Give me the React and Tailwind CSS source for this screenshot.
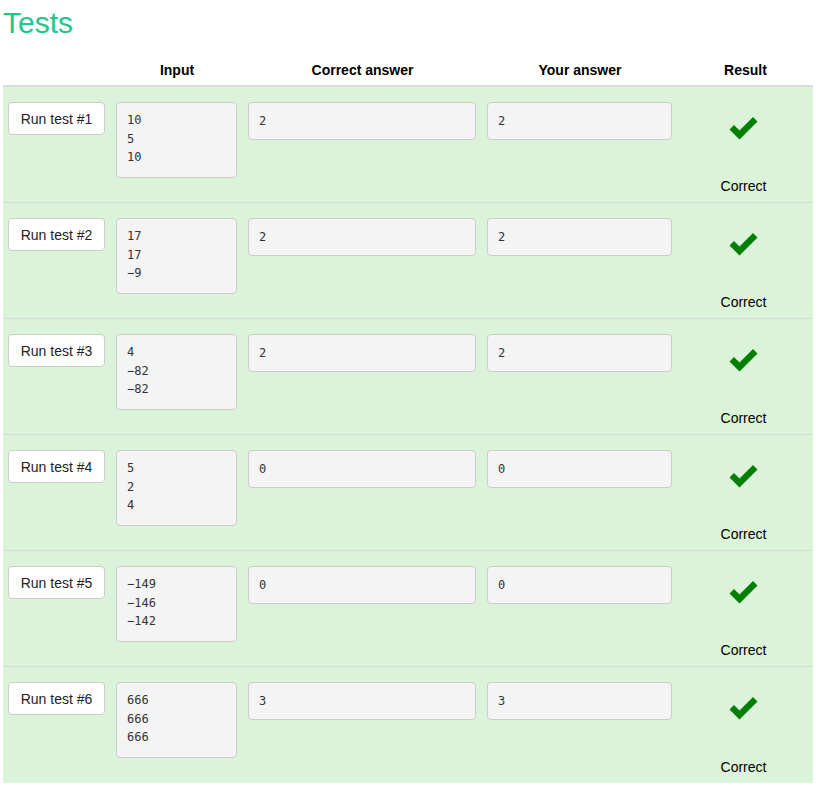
import React from 'react';

const TESTS = [
  { input: ['10', '5', '10'], expected: '2', got: '2' },
  { input: ['17', '17', '-9'], expected: '2', got: '2' },
  { input: ['4', '-82', '-82'], expected: '2', got: '2' },
  { input: ['5', '2', '4'], expected: '0', got: '0' },
  { input: ['-149', '-146', '-142'], expected: '0', got: '0' },
  { input: ['666', '666', '666'], expected: '3', got: '3' },
];

const COLS = 'grid grid-cols-[108px_132px_239px_196px_135px]';

const CheckIcon = () => (
  <svg width="31" height="24" viewBox="0 0 31 24" className="block">
    <path d="M1.5 13.5 L6 9 L11.5 14.5 L25 1 L29.5 5.5 L11.5 23.5 Z" fill="#008000" />
  </svg>
);

const App = () => {
  return (
    <div className="min-h-screen bg-white px-[3px] pt-[5px] font-['Liberation_Sans',Arial,sans-serif] text-black">
      <h1 className="text-[30px] leading-[36px] text-[#1cc88e]">Tests</h1>

      <div className="mt-[14px] w-[810px]">
        <div className={`${COLS} h-[32px] items-center border-b-2 border-[#dddddd] text-[14px] font-bold`}>
          <div />
          <div className="text-center">Input</div>
          <div className="text-center">Correct answer</div>
          <div className="text-center">Your answer</div>
          <div className="text-center">Result</div>
        </div>

        {TESTS.map((t, i) => (
          <div
            key={i}
            className={`${COLS} h-[116px] bg-[#dbf3d8] ${i < TESTS.length - 1 ? 'border-b border-[#d6dcd5]' : ''}`}
          >
            <div className="px-[5px] pt-[15px]">
              <button className="h-[33px] w-[97px] rounded-[4px] border border-[#cccccc] bg-white text-[14px] leading-[18px] text-[#222]">
                Run test #{i + 1}
              </button>
            </div>
            <div className="px-[5px] pt-[15px]">
              <div className="h-[76px] w-[121px] rounded-[4px] border border-[#cccccc] bg-[#f4f4f4] px-[10px] pt-[8px] font-['DejaVu_Sans_Mono',monospace] text-[12px] leading-[18.5px] text-[#333]">
                {t.input.map((line, j) => (
                  <div key={j}>{line.replace('-', '\u2212')}</div>
                ))}
              </div>
            </div>
            <div className="px-[5px] pt-[15px]">
              <div className="h-[38px] w-[228px] rounded-[4px] border border-[#cccccc] bg-[#f4f4f4] px-[10px] pt-[9px] font-['DejaVu_Sans_Mono',monospace] text-[12px] leading-[18px] text-[#333]">
                {t.expected}
              </div>
            </div>
            <div className="px-[5px] pt-[15px]">
              <div className="h-[38px] w-[185px] rounded-[4px] border border-[#cccccc] bg-[#f4f4f4] px-[10px] pt-[9px] font-['DejaVu_Sans_Mono',monospace] text-[12px] leading-[18px] text-[#333]">
                {t.got}
              </div>
            </div>
            <div className="flex flex-col items-center pr-[4px] pt-[29px] pb-[7px]">
              <CheckIcon />
              <div className="mt-auto text-[14px] leading-[18px]">Correct</div>
            </div>
          </div>
        ))}
      </div>
    </div>
  );
};

export default App;
